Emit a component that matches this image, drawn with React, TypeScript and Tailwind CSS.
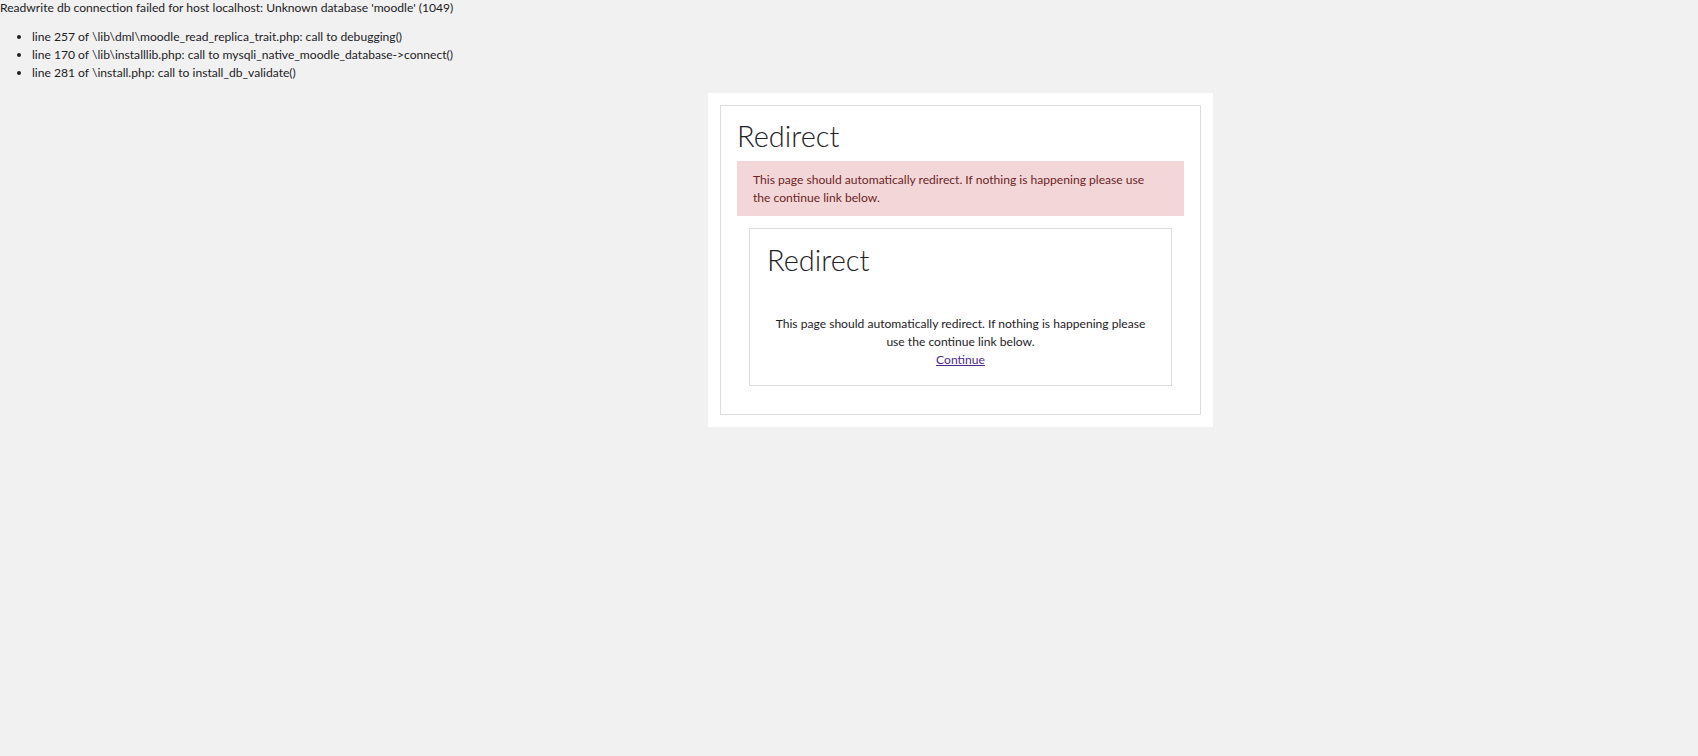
export default function App() {
  return (
    <div className="min-h-screen w-full bg-[#f1f1f1] text-[#1d2125] font-['Lato','Open_Sans',sans-serif]">
      <div className="text-[12.1px] leading-[15px]">
        Readwrite db connection failed for host localhost: Unknown database 'moodle' (1049)
      </div>
      <ul className="mt-[13px] list-disc pl-[32px] text-[12.1px] leading-[18px]">
        <li>line 257 of \lib\dml\moodle_read_replica_trait.php: call to debugging()</li>
        <li>line 170 of \lib\installlib.php: call to mysqli_native_moodle_database-&gt;connect()</li>
        <li>line 281 of \install.php: call to install_db_validate()</li>
      </ul>

      <div className="ml-[708px] mt-[11px] w-[505px] bg-white p-3">
        <div className="border border-[#dcdcdc] px-4 pt-3 pb-[28px]">
          <h2 className="text-[29px] font-light leading-[36px] text-[#1d2125]">Redirect</h2>

          <div className="mt-[7px] bg-[#f3d7d8] pl-4 pr-[28px] pt-[10px] pb-[9px] text-[12.1px] leading-[18px] text-[#6b2426]">
            This page should automatically redirect. If nothing is happening please use the continue link
            below.
          </div>

          <div className="mx-3 mt-3 border border-[#dcdcdc] px-[17px] pt-[13px] pb-4">
            <h2 className="text-[29px] font-light leading-[36px] text-[#1d2125]">Redirect</h2>
            <div className="mt-[37px] text-center text-[12.1px] leading-[18px]">
              <p>
                This page should automatically redirect. If nothing is happening please use the continue
                link below.
              </p>
              <a href="#" className="text-[#4b2a8b] underline">
                Continue
              </a>
            </div>
          </div>
        </div>
      </div>
    </div>
  );
}
